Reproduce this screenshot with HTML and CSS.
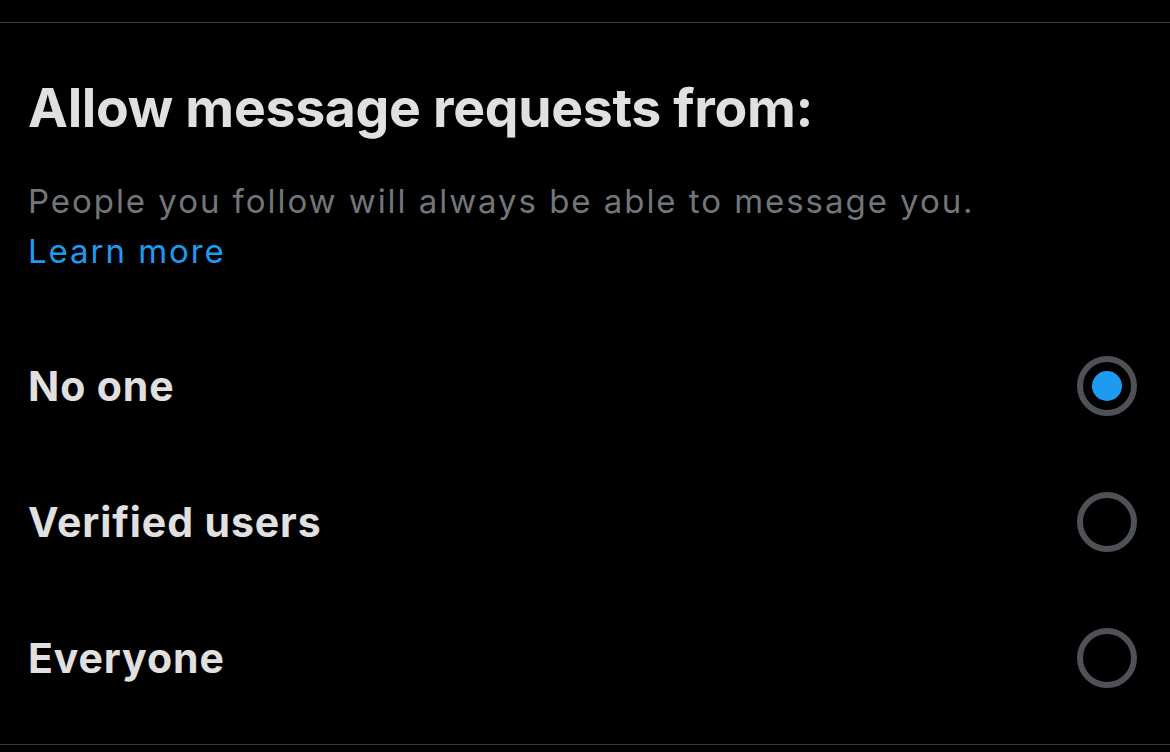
FILE: index.html
```html
<!DOCTYPE html>
<html lang="en">
<head>
<meta charset="utf-8">
<title>Allow message requests from</title>
<link rel="stylesheet" href="styles.css">
</head>
<body>
<div class="top-rule"></div>
<section class="settings">
  <h1 class="title">Allow message requests from:</h1>
  <p class="desc">People you follow will always be able to message you.<br><a class="link" href="#">Learn more</a></p>
  <ul class="options">
    <li class="option">
      <span class="label">No one</span>
      <span class="radio checked"><span class="dot"></span></span>
    </li>
    <li class="option">
      <span class="label">Verified users</span>
      <span class="radio"></span>
    </li>
    <li class="option">
      <span class="label">Everyone</span>
      <span class="radio"></span>
    </li>
  </ul>
</section>
</body>
</html>
```
FILE: styles.css
```css
html, body {
  margin: 0;
  padding: 0;
  background: #000;
}
body {
  font-family: "Inter", "Roboto", "Liberation Sans", sans-serif;
  color: #e0e0e0;
  width: 1170px;
  height: 752px;
  overflow: hidden;
}
.top-rule {
  height: 22px;
  border-bottom: 1px solid #3a3b3d;
}
.settings {
  padding: 0 33px 18px 28px;
  border-bottom: 1px solid #3a3b3d;
}
.title {
  margin: 53px 0 0;
  font-size: 53.5px;
  line-height: 64px;
  font-weight: 700;
  color: #e0e0e0;
  letter-spacing: -0.3px;
}
.desc {
  margin: 36px 0 0;
  font-size: 33px;
  line-height: 50px;
  font-weight: 400;
  color: #71767b;
  letter-spacing: 1.95px;
}
.link {
  color: #1d9bf0;
  text-decoration: none;
}
.options {
  list-style: none;
  margin: 42px 0 0;
  padding: 0;
}
.option {
  height: 136px;
  display: flex;
  align-items: center;
  justify-content: space-between;
}
.label {
  font-size: 41px;
  font-weight: 700;
  color: #e0e0e0;
  letter-spacing: 0.9px;
}
.radio {
  width: 60px;
  height: 60px;
  box-sizing: border-box;
  border: 6px solid #4e5256;
  border-radius: 50%;
  display: flex;
  align-items: center;
  justify-content: center;
}
.dot {
  width: 30px;
  height: 30px;
  border-radius: 50%;
  background: #1d9bf0;
}
```
